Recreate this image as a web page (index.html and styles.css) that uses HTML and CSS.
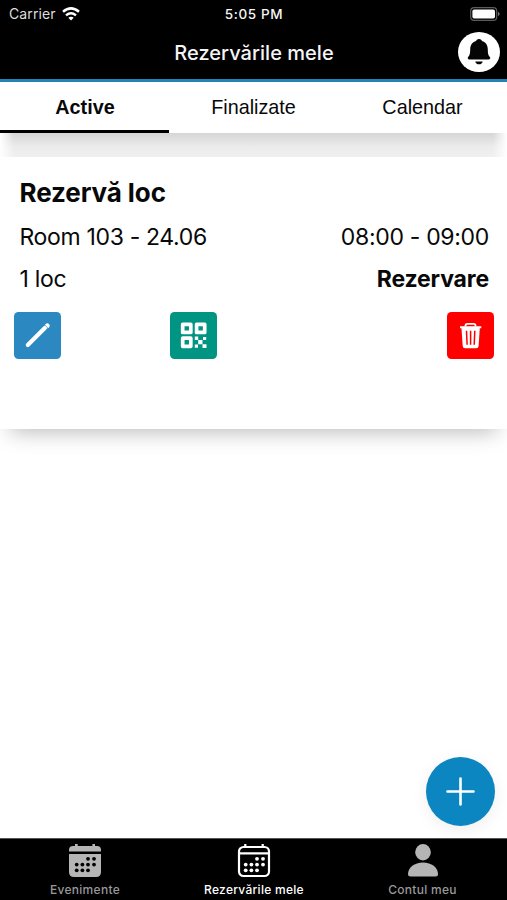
FILE: index.html
```html
<!DOCTYPE html>
<html lang="ro">
<head>
<meta charset="utf-8">
<meta name="viewport" content="width=device-width">
<title>Rezervările mele</title>
<link rel="stylesheet" href="styles.css">
</head>
<body>
<div class="app">
  <header class="header">
    <div class="status">
      <div class="carrier"><span class="carrier-name">Carrier</span>
        <svg class="wifi" viewBox="0 0 18 14" fill="none" stroke="#fff" stroke-width="2.5"><path d="M1 4.8Q9-2 17 4.8M4 8.4Q9 4.2 14 8.4"/><path d="M9 13.5L6.3 10.7Q9 8.8 11.7 10.7Z" fill="#fff" stroke="none"/></svg>
      </div>
      <time class="clock">5:05 PM</time>
      <svg class="battery" viewBox="0 0 30 14"><rect x=".7" y=".7" width="26" height="12.6" rx="3.4" fill="none" stroke="#5c5c5c" stroke-width="1.2"/><rect x="2.4" y="2.4" width="22.6" height="9.2" rx="1.8" fill="#fff"/><path d="M28 4.8q3.4 2.2 0 4.4z" fill="#777"/></svg>
    </div>
    <div class="titlebar">
      <h1 class="title">Rezervările mele</h1>
      <button class="bell" aria-label="Notificări">
        <svg viewBox="0 0 42 40"><path d="M21 7c-1.800 0-2.700 1-2.900 2.100-4 1-5.900 4.200-5.900 8.300 0 4.600-.8 6-2.100 7.700-.8 1.100-.2 2.400 1.300 2.400h19.200c1.500 0 2.100-1.300 1.300-2.400-1.300-1.700-2.100-3.100-2.100-7.700 0-4.100-1.900-7.300-5.900-8.300C23.700 8 22.800 7 21 7zM17.300 29.400h7.400c-.4 1.800-1.600 2.900-3.700 2.900s-3.300-1.100-3.700-2.900z" fill="#050505"/></svg>
      </button>
    </div>
  </header>
  <nav class="tabs">
    <span class="tab selected">Active</span>
    <span class="tab">Finalizate</span>
    <span class="tab">Calendar</span>
  </nav>
  <main class="content">
    <div class="gap"></div>
    <article class="card">
      <h2 class="card-title">Rezervă loc</h2>
      <div class="row"><span class="room">Room 103 - 24.06</span><span class="hours">08:00 - 09:00</span></div>
      <div class="row seats"><span class="places">1 loc</span><strong class="kind">Rezervare</strong></div>
      <div class="actions">
        <button class="action edit" aria-label="Editează"><svg viewBox="0 0 47 47" fill="none" stroke="#fff" stroke-linecap="round"><path d="M13.800 33L30.800 16.100" stroke-width="4.200"/><path d="M33.200 13.800l.1-.1" stroke-width="4.800"/><path d="M30.300 12.500l4.200 4.200" stroke="#2c88c0" stroke-width=".7"/></svg></button>
        <button class="action qr" aria-label="Cod QR"><svg viewBox="0 0 47 47"><g fill="none" stroke="#fff" stroke-width="3.700" stroke-linejoin="round"><path d="M12.700 12.300h8.100v8.100h-8.100zM26.600 12.300h8.100v8.100h-8.100zM12.700 26.200h8.100v8.100h-8.100z"/></g><path fill="#fff" d="M24.800 24.500h3.400v3.400h-3.400zM28.200 27.900h4.300v4.300h-4.300zM33 24.900h3.200v3.200H33zM24.800 32.500h3.200v3.200h-3.200zM32.500 32.200h4v3.900h-4z"/></svg></button>
        <button class="action delete" aria-label="Șterge"><svg viewBox="0 0 47 47" fill="none"><path d="M18.500 14.500v-.8q0-1.900 1.900-1.900h6.200q1.900 0 1.900 1.900v.8" stroke="#fff" stroke-width="1.800"/><path d="M13 14.300h21.300v2H13zM14.500 16.300h18.300l-1.200 17.800q-.2 2.200-2.300 2.200H18q-2.100 0-2.300-2.200z" fill="#fff"/><path d="M19.500 18.800l.6 14M23.600 18.800v14M27.800 18.800l-.6 14" stroke="#f00" stroke-width="1.500"/></svg></button>
      </div>
    </article>
    <button class="add" aria-label="Adaugă"><svg viewBox="0 0 69 69" stroke="#fff" stroke-width="2.600" stroke-linecap="round"><path d="M34.500 21.500v26M21.500 34.500h26"/></svg></button>
  </main>
  <footer class="nav">
    <a class="nav-item"><svg viewBox="0 0 34 34"><path d="M7 0h2.700v2h14.700V0H27v2h2q4 0 4 4v1.500H1V6q0-4 4-4h2zM1 10h32v18q0 5-5 5H6q-5 0-5-5z" fill="#b5b5b5"/><g fill="#000"><circle cx="20" cy="14.800" r="1.900"/><circle cx="26" cy="14.800" r="1.900"/><circle cx="8.700" cy="20.600" r="1.900"/><circle cx="14.400" cy="20.600" r="1.900"/><circle cx="20" cy="20.600" r="1.900"/><circle cx="26" cy="20.600" r="1.900"/><circle cx="8.700" cy="26.300" r="1.900"/><circle cx="14.400" cy="26.300" r="1.900"/><circle cx="20" cy="26.300" r="1.900"/></g></svg><span>Evenimente</span></a>
    <a class="nav-item current"><svg viewBox="0 0 34 34"><g fill="none" stroke="#fff" stroke-width="2.200"><rect x="2" y="3" width="30" height="29" rx="4.500"/><path d="M2 9.300h30M8.300 0v3M25.700 0v3"/></g><g fill="#fff"><circle cx="20" cy="14.800" r="1.900"/><circle cx="26" cy="14.800" r="1.900"/><circle cx="8.700" cy="20.600" r="1.900"/><circle cx="14.400" cy="20.600" r="1.900"/><circle cx="20" cy="20.600" r="1.900"/><circle cx="26" cy="20.600" r="1.900"/><circle cx="8.700" cy="26.300" r="1.900"/><circle cx="14.400" cy="26.300" r="1.900"/><circle cx="20" cy="26.300" r="1.900"/></g></svg><span class="label-bookings">Rezervările mele</span></a>
    <a class="nav-item account"><svg viewBox="0 0 34 34" fill="#b5b5b5"><ellipse cx="17" cy="8.200" rx="7.800" ry="8.200"/><path d="M4.500 32.500Q2 32.500 2 30c0-6.500 6.500-11.500 15-11.500S32 23.500 32 30q0 2.500-2.500 2.500z"/></svg><span>Contul meu</span></a>
  </footer>
</div>
</body>
</html>
```
FILE: styles.css
```css
* { box-sizing: border-box; }
body { margin: 0; font-family: Inter, "Liberation Sans", sans-serif; color: #080808; background: #fff; }
h1, h2 { margin: 0; }
button { border: 0; padding: 0; display: block; }
svg { display: block; }
.app { width: 507px; height: 900px; display: flex; flex-direction: column; overflow: hidden; }
.header { height: 82px; flex: none; background: #000; color: #f5f5f5; border-bottom: 3px solid #2483b5; }
.status { height: 27px; display: grid; grid-template-columns: 1fr auto 1fr; align-items: center; padding: 0 7px 0 8px; font-size: 13px; }
.carrier { display: flex; align-items: center; gap: 6px; color: #ddd; }
.carrier-name { font-size: 14px; letter-spacing: .1px; padding-left: 1px; }
.wifi { width: 18px; height: 14px; }
.clock { font-weight: 500; font-size: 13.5px; letter-spacing: .6px; }
.battery { width: 30px; height: 14px; justify-self: end; }
.titlebar { height: 52px; display: grid; grid-template-columns: 1fr auto 1fr; align-items: center; padding: 0 7px 2px 8px; }
.title { grid-column: 2; font-size: 20px; line-height: 26px; font-weight: 500; letter-spacing: .03px; padding-top: 2px; }
.bell { width: 42px; height: 40px; border-radius: 50%; background: #fff; justify-self: end; }
.tabs { height: 51px; flex: none; display: grid; grid-template-columns: repeat(3, 1fr); background: #fff; font-family: "Liberation Sans", sans-serif; font-size: 19.8px; }
.tab { display: flex; justify-content: center; align-items: center; border-bottom: 3px solid transparent; padding: 2px 0 0 0; }
.tab.selected { font-weight: 700; border-color: #000; padding-left: 1px; }
.content { flex: 1; display: flex; flex-direction: column; background: #fff; }
.gap { height: 24px; flex: none; background: linear-gradient(90deg, #fff, transparent 14px calc(100% - 14px), #fff), linear-gradient(#d6d6d6, #ececec 14px, #f0f0f0); }
.card { height: 272px; flex: none; background: #fff; padding: 20px 13px 0 14px; box-shadow: 0 13px 20px -10px rgba(0, 0, 0, .27); }
.card-title { font-size: 26px; line-height: 32px; font-weight: 700; letter-spacing: -.1px; padding-left: 5.5px; }
.row { display: flex; justify-content: space-between; padding: 0 5px 0 5.5px; height: 42px; margin-top: 7px; align-items: center; font-size: 23px; }
.row.seats { margin-top: 0; }
.room { letter-spacing: -.34px; }
.hours { letter-spacing: -.32px; }
.places { letter-spacing: -.3px; }
.kind { font-weight: 700; letter-spacing: -.15px; }
.actions { display: grid; grid-template-columns: repeat(3, 1fr); margin-top: 12px; }
.action { width: 47px; height: 47px; border-radius: 4.5px; }
.edit { background: #2c88c0; }
.qr { background: #009482; margin-left: -4px; }
.delete { background: #f00; justify-self: end; }
.add { width: 69px; height: 69px; border-radius: 50%; background: #0c86c0; margin: auto 12px 12px auto; box-shadow: 0 4px 16px rgba(0, 0, 0, .07); }
.nav { height: 62px; flex: none; background: #000; border-top: 1px solid #555; display: grid; grid-template-columns: repeat(3, 1fr); }
.nav-item { display: flex; flex-direction: column; align-items: center; padding-top: 5px; color: #999; font-size: 12px; font-weight: 500; line-height: 16px; gap: 4px; letter-spacing: .3px; padding-left: 1px; }
.nav-item.account { padding-left: 0; }
.nav-item svg { width: 34px; height: 34px; }
.nav-item.current { color: #fff; }
.label-bookings { letter-spacing: .28px; }
```
